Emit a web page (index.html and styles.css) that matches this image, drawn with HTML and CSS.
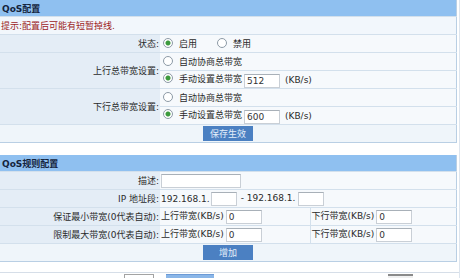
FILE: index.html
```html
<!DOCTYPE html>
<html>
<head>
    <meta charset="utf-8">
    <title>QoS配置</title>
    <link rel="stylesheet" href="styles.css">
</head>
<body>
<div class="page">
    <table class="panel">
        <colgroup><col class="c-label"><col></colgroup>
        <tr><th colspan="2" class="title">QoS配置</th></tr>
        <tr><td colspan="2" class="tip">提示:配置后可能有短暂掉线.</td></tr>
        <tr>
            <td class="label">状态:</td>
            <td class="value">
                <label class="opt"><input type="radio" name="state" checked>启用</label><label class="opt off"><input type="radio" name="state">禁用</label>
            </td>
        </tr>
        <tr>
            <td class="label" rowspan="2">上行总带宽设置:</td>
            <td class="value"><label class="opt"><input type="radio" name="up">自动协商总带宽</label></td>
        </tr>
        <tr>
            <td class="value"><label class="opt"><input type="radio" name="up" checked>手动设置总带宽</label><input type="text" class="num" value="512"><span class="unit">(KB/s)</span></td>
        </tr>
        <tr>
            <td class="label" rowspan="2">下行总带宽设置:</td>
            <td class="value"><label class="opt"><input type="radio" name="down">自动协商总带宽</label></td>
        </tr>
        <tr>
            <td class="value"><label class="opt"><input type="radio" name="down" checked>手动设置总带宽</label><input type="text" class="num" value="600"><span class="unit">(KB/s)</span></td>
        </tr>
        <tr><td colspan="2" class="actions"><button type="button" class="btn">保存生效</button></td></tr>
    </table>

    <table class="panel rules">
        <colgroup><col class="c-label"><col class="c-half"><col></colgroup>
        <tr><th colspan="3" class="title">QoS规则配置</th></tr>
        <tr>
            <td class="label">描述:</td>
            <td class="value" colspan="2"><input type="text" class="desc"></td>
        </tr>
        <tr>
            <td class="label">IP 地址段:</td>
            <td class="value" colspan="2">192.168.1.<input type="text" class="ip"><span class="dash">- 192.168.1.</span><input type="text" class="ip"></td>
        </tr>
        <tr>
            <td class="label">保证最小带宽(0代表自动):</td>
            <td class="value">上行带宽(KB/s)<input type="text" class="num" value="0"></td>
            <td class="value">下行带宽(KB/s)<input type="text" class="num" value="0"></td>
        </tr>
        <tr>
            <td class="label">限制最大带宽(0代表自动):</td>
            <td class="value">上行带宽(KB/s)<input type="text" class="num" value="0"></td>
            <td class="value">下行带宽(KB/s)<input type="text" class="num" value="0"></td>
        </tr>
        <tr><td colspan="3" class="actions"><button type="button" class="btn">增加</button></td></tr>
    </table>

    <div class="list-bar">
        <span class="box-gray"></span>
        <span class="box-blue"></span>
        <span class="box-dark"></span>
    </div>
</div>
</body>
</html>
```

FILE: styles.css
```css
body {
    margin: 0;
    background: #fff;
    font-family: "DejaVu Sans", "Noto Sans CJK SC", sans-serif;
    font-size: 9px;
    color: #2a2a2a;
}

.page {
    width: 459px;
    height: 278px;
    border-right: 1px solid #dde5ee;
    overflow: hidden;
}

.panel {
    width: 457px;
    table-layout: fixed;
    border-collapse: collapse;
    border: 1px solid #b9cfe4;
    border-left: none;
    border-top: none;
}

.rules {
    margin-top: 12px;
}

.c-label {
    width: 160px;
}

.c-half {
    width: 150px;
}

.panel td, .panel th {
    height: 17px;
    padding: 0;
    border-top: 1px solid #d3e0ec;
    white-space: nowrap;
}

.title {
    height: 16px !important;
    background: #8fc0f0;
    color: #14243c;
    font-weight: bold;
    text-align: left;
    padding-left: 2px !important;
    border-top: none !important;
}

.tip {
    background: #f2f7fc;
    color: #9c1c1c;
    padding-left: 1px !important;
}

.label {
    background: #e4edf6;
    text-align: right;
    padding-right: 1px !important;
}

.value {
    background: #f6f9fc;
    padding-left: 1px !important;
}

.rules .value + .value {
    border-left: 1px solid #d3e0ec;
}

.actions {
    background: #eff5fa;
    padding-left: 203px !important;
}

.opt {
    display: inline-flex;
    align-items: center;
}

.opt.off {
    margin-left: 18px;
}

input[type="radio"] {
    appearance: none;
    -webkit-appearance: none;
    width: 10px;
    height: 10px;
    margin: 0 6px 0 2px;
    border: 1px solid #8d9aa6;
    border-radius: 50%;
    background: #fff;
}

input[type="radio"]:checked {
    background: radial-gradient(circle, #3d9a3d 0, #3d9a3d 2px, #fff 3px);
}

input[type="text"] {
    height: 14px;
    box-sizing: border-box;
    padding: 0 2px;
    border: 1px solid #c9cfd6;
    border-top-color: #a8b0b8;
    background: #fff;
    font: inherit;
    color: #333;
    vertical-align: middle;
}

.num {
    width: 36px;
    margin-left: 2px;
}

.unit {
    margin-left: 5px;
}

.desc {
    width: 80px;
}

.ip {
    width: 26px;
    margin-left: 1px;
}

.dash {
    margin: 0 2px 0 4px;
}

.btn {
    width: 50px;
    height: 15px;
    padding: 0;
    border: none;
    background: #4b80c2;
    color: #e3eefa;
    font: inherit;
    vertical-align: middle;
}

.list-bar {
    display: flex;
    margin-top: 10px;
    height: 20px;
    border-top: 1px solid #d6dee8;
}

.box-gray {
    width: 28px;
    height: 18px;
    margin: 1px 0 0 124px;
    border: 1px solid #a3a3a3;
    background: #fff;
}

.box-blue {
    width: 48px;
    height: 18px;
    margin: 1px 0 0 12px;
    border-top: 1px solid #6d9bd6;
    background: #8ab6e8;
}

.box-dark {
    width: 25px;
    height: 18px;
    margin: 1px 0 0 174px;
    border-top: 2px solid #8a8a8a;
    background: #f0f0f0;
}
```
